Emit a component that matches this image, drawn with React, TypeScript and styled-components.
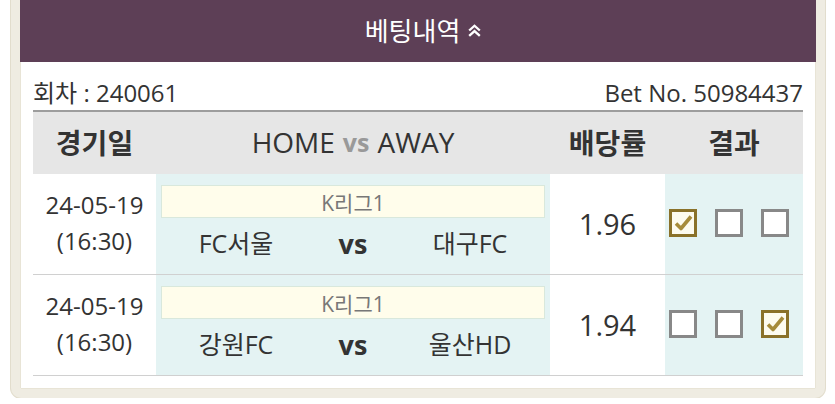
import React from "react";
import styled, { createGlobalStyle } from "styled-components";

const Global = createGlobalStyle`
  html, body { margin: 0; padding: 0; background: #ffffff; }
  body { font-family: "Open Sans", "Noto Sans CJK KR", sans-serif; color: #333; }
  * { box-sizing: border-box; }
`;

const Frame = styled.div`
  margin-left: 11px;
  width: 814px;
  height: 398px;
  border: 9px solid #efece2;
  border-top: 0;
  border-radius: 0 0 10px 10px;
  box-shadow: 0 0 0 1px #e2ddcd, inset 0 0 0 1px #e8e4d6;
  background: #fff;
  display: flex;
  flex-direction: column;
`;

const TitleBar = styled.div`
  height: 62px;
  background: #5d3f56;
  color: #fff;
  display: flex;
  align-items: center;
  justify-content: center;
  gap: 6px;
  font-size: 26px;
  padding-left: 12px;
  padding-bottom: 2px;
`;

const Body = styled.div`
  padding: 0 13px;
  display: flex;
  flex-direction: column;
`;

const InfoRow = styled.div`
  height: 48px;
  padding-top: 14px;
  display: flex;
  justify-content: space-between;
  font-size: 24px;
  line-height: 34px;
  color: #333;
`;

const Grid = styled.div`
  display: grid;
  grid-template-columns: 123px 394px 115px 138px;
`;

const HeadCell = styled.div<{ $bold?: boolean }>`
  height: 64px;
  background: #e6e6e6;
  border-top: 2px solid #9d9d9d;
  display: flex;
  align-items: center;
  justify-content: center;
  font-size: 28px;
  font-weight: ${(p) => (p.$bold ? 700 : 400)};
  color: #333;
  padding-bottom: 3px;
`;

const Vs = styled.span`
  color: #999;
  font-weight: 700;
  margin: 0 8px;
  font-size: 25px;
`;

const Cell = styled.div<{ $tint?: boolean }>`
  height: 101px;
  border-bottom: 1px solid #d0d0d0;
  background: ${(p) => (p.$tint ? "#e4f3f3" : "#fff")};
  display: flex;
  align-items: center;
  justify-content: center;
`;

const DateText = styled.div`
  font-size: 24px;
  line-height: 36px;
  text-align: center;
  color: #333;
  padding-bottom: 3px;
`;

const MatchCell = styled.div`
  height: 101px;
  border-bottom: 1px solid #d0d0d0;
  background: #e4f3f3;
  padding: 11px 5px 0;
  display: flex;
  flex-direction: column;
`;

const League = styled.div`
  height: 33px;
  background: #fffdeb;
  border: 1px solid #d9e8dc;
  display: flex;
  align-items: center;
  justify-content: center;
  font-size: 21px;
  color: #777;
`;

const Teams = styled.div`
  margin: 4px -5px 0;
  height: 36px;
  display: grid;
  grid-template-columns: 160px 74px 160px;
  align-items: center;
  text-align: center;
  font-size: 25px;
  color: #333;
`;

const VsBold = styled.span`
  font-weight: 700;
  font-size: 27px;
  padding-top: 3px;
`;

const Odds = styled.div`
  font-size: 29px;
  color: #333;
  padding-bottom: 2px;
`;

const Boxes = styled.div`
  display: flex;
  gap: 18px;
  padding: 0 10px 3px 0;
`;

const Box = styled.div<{ $on?: boolean }>`
  width: 28px;
  height: 28px;
  border: 3px solid ${(p) => (p.$on ? "#8a7129" : "#888")};
  background: ${(p) => (p.$on ? "#fdfbef" : "#fff")};
  display: flex;
  align-items: center;
  justify-content: center;
`;

const Check = () => (
  <svg width="20" height="18" viewBox="0 0 20 18">
    <polyline
      points="3,9.5 8,14.5 18,2.5"
      fill="none"
      stroke="#a68b3a"
      strokeWidth="3.6"
      strokeLinejoin="round"
    />
  </svg>
);

const Chevrons = () => (
  <svg width="17" height="17" viewBox="0 0 16 16" fill="none" stroke="#fff" strokeWidth="2.2">
    <path d="M3 8 L8 3.5 L13 8" />
    <path d="M3 13 L8 8.5 L13 13" />
  </svg>
);

type Row = { home: string; away: string; odds: string; result: number };
const rows: Row[] = [
  { home: "FC서울", away: "대구FC", odds: "1.96", result: 0 },
  { home: "강원FC", away: "울산HD", odds: "1.94", result: 2 },
];

export default function App() {
  return (
    <>
      <Global />
      <Frame>
        <TitleBar>
          <span>베팅내역</span>
          <Chevrons />
        </TitleBar>
        <Body>
          <InfoRow>
            <span>회차 : 240061</span>
            <span>Bet No. 50984437</span>
          </InfoRow>
          <Grid>
            <HeadCell $bold>경기일</HeadCell>
            <HeadCell>
              HOME<Vs>vs</Vs>AWAY
            </HeadCell>
            <HeadCell $bold>배당률</HeadCell>
            <HeadCell $bold>결과</HeadCell>
            {rows.map((r, i) => (
              <React.Fragment key={i}>
                <Cell>
                  <DateText>
                    24-05-19
                    <br />
                    (16:30)
                  </DateText>
                </Cell>
                <MatchCell>
                  <League>K리그1</League>
                  <Teams>
                    <span>{r.home}</span>
                    <VsBold>vs</VsBold>
                    <span>{r.away}</span>
                  </Teams>
                </MatchCell>
                <Cell>
                  <Odds>{r.odds}</Odds>
                </Cell>
                <Cell $tint>
                  <Boxes>
                    {[0, 1, 2].map((k) => (
                      <Box key={k} $on={k === r.result}>
                        {k === r.result && <Check />}
                      </Box>
                    ))}
                  </Boxes>
                </Cell>
              </React.Fragment>
            ))}
          </Grid>
        </Body>
      </Frame>
    </>
  );
}
